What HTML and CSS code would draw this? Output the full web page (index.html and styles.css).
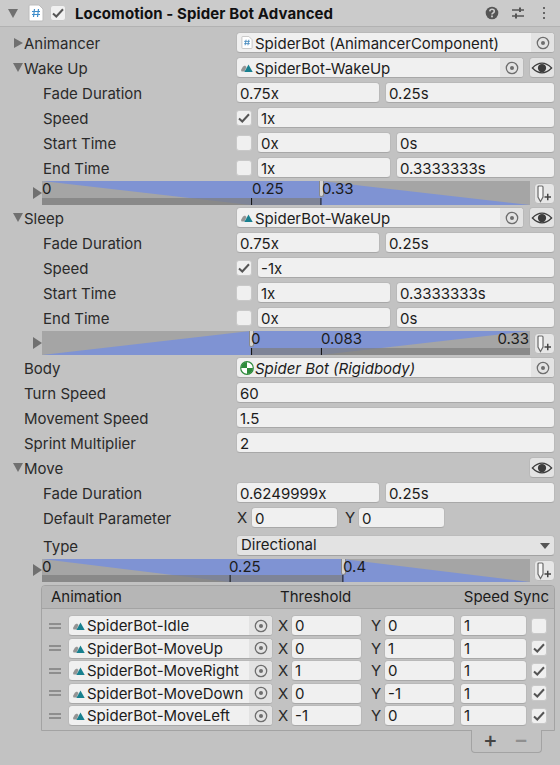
FILE: index.html
```html
<!DOCTYPE html>
<html lang="en">
<head>
    <meta charset="UTF-8">
    <title>Locomotion - Spider Bot Advanced</title>
    <link rel="stylesheet" href="styles.css">
</head>
<body>

    <svg class="defs" width="0" height="0">
        <symbol id="i-clip" viewBox="0 0 14 12">
            <path d="M1 8.500 L3 5 L5 4 L6.500 5.500 L4.500 10 L1.500 10 Z" fill="#949494"/>
            <path d="M8.500 3 L12.700 10.500 L4.300 10.500 Z" fill="#17808f"/>
        </symbol>
        <symbol id="i-script" viewBox="0 0 12 14">
            <path d="M0.500 1.500 Q0.500 0.500 1.500 0.500 H8 L11.500 4 V12.500 Q11.500 13.500 10.500 13.500 H1.500 Q0.500 13.500 0.500 12.500 Z" fill="#fff" stroke="#c4c4c4"/>
            <path d="M5 4 L4 10 M8 4 L7 10 M3 5.800 H9 M3 8.200 H9" stroke="#4d8fc0" stroke-width="1" fill="none"/>
        </symbol>
        <symbol id="i-target" viewBox="0 0 14 14">
            <circle cx="7" cy="7" r="5.700" fill="none" stroke="#6e6e6e" stroke-width="1.300"/>
            <circle cx="7" cy="7" r="2" fill="#6e6e6e"/>
        </symbol>
        <symbol id="i-eye" viewBox="0 0 24 14">
            <path d="M1.500 7 Q12 -3.500 22.500 7 Q12 17.500 1.500 7 Z" fill="none" stroke="#3c3c3c" stroke-width="1.400"/>
            <circle cx="12" cy="7" r="4.500" fill="#3c3c3c"/>
        </symbol>
        <symbol id="i-check" viewBox="0 0 12 10">
            <path d="M1 5.500 L4.300 8.500 L11 1.300" fill="none" stroke="#555" stroke-width="2"/>
        </symbol>
        <symbol id="i-event" viewBox="0 0 19 19">
            <path d="M3 3 Q3 2 4 2 H7 Q8 2 8 3 V13 L5.500 17.500 L3 13 Z" fill="#f7f7f7" stroke="#6a6a6a" stroke-width="1.200"/>
            <path d="M9.500 13 H16 M12.750 9.750 V16.250" stroke="#444" stroke-width="1.500" fill="none"/>
        </symbol>
    </svg>

    <div class="header">
        <span class="arrow arrow-down header-arrow"></span>
        <svg class="header-script" viewBox="0 0 16 18">
            <path d="M1 2 Q1 1 2 1 H11 L15 5 V16 Q15 17 14 17 H2 Q1 17 1 16 Z" fill="#fff" stroke="#bdbdbd"/>
            <path d="M6.500 5 L5.500 13 M10.500 5 L9.500 13 M4 7.500 H12 M4 10.500 H12" stroke="#3f8ecb" stroke-width="1.200" fill="none"/>
        </svg>
        <span class="check header-check"><svg><use href="#i-check"/></svg></span>
        <span class="header-title">Locomotion - Spider Bot Advanced</span>
        <svg class="header-icon" viewBox="0 0 14 14">
            <circle cx="7" cy="7" r="6.300" fill="#555"/>
            <path d="M4.800 5.300 Q5 3.300 7 3.300 Q9.300 3.300 9.300 5.200 Q9.300 6.300 8 7 Q7 7.500 7 8.500" fill="none" stroke="#cbcbcb" stroke-width="1.600"/>
            <rect x="6.100" y="9.500" width="1.800" height="1.800" fill="#cbcbcb"/>
        </svg>
        <svg class="header-icon sliders" viewBox="0 0 14 14">
            <path d="M1 4 H13 M1 10 H13" stroke="#555" stroke-width="1.300"/>
            <path d="M9 1.500 V6 M5 7.500 V12.500" stroke="#555" stroke-width="2"/>
        </svg>
        <svg class="header-icon kebab" viewBox="0 0 4 14">
            <rect x="1" y="1" width="2" height="2" fill="#666"/>
            <rect x="1" y="6" width="2" height="2" fill="#666"/>
            <rect x="1" y="11" width="2" height="2" fill="#666"/>
        </svg>
    </div>

    <div class="content">

        <div class="row">
            <span class="label foldout"><span class="arrow arrow-right"></span>Animancer</span>
            <div class="object-field">
                <svg class="obj-icon"><use href="#i-script"/></svg>
                <span class="obj-name">SpiderBot (AnimancerComponent)</span>
                <span class="picker"><svg><use href="#i-target"/></svg></span>
            </div>
        </div>

        <div class="row">
            <span class="label foldout"><span class="arrow arrow-down"></span>Wake Up</span>
            <div class="object-field">
                <svg class="obj-icon"><use href="#i-clip"/></svg>
                <span class="obj-name">SpiderBot-WakeUp</span>
                <span class="picker"><svg><use href="#i-target"/></svg></span>
            </div>
            <span class="eye-button"><svg><use href="#i-eye"/></svg></span>
        </div>

        <div class="row fade-row">
            <span class="label sub">Fade Duration</span>
            <div class="field">0.75x</div>
            <div class="field">0.25s</div>
        </div>
        <div class="row">
            <span class="label sub">Speed</span>
            <span class="check"><svg><use href="#i-check"/></svg></span>
            <div class="field">1x</div>
        </div>
        <div class="row time-row">
            <span class="label sub">Start Time</span>
            <span class="check"></span>
            <div class="field">0x</div>
            <div class="field">0s</div>
        </div>
        <div class="row time-row">
            <span class="label sub">End Time</span>
            <span class="check"></span>
            <div class="field">1x</div>
            <div class="field">0.3333333s</div>
        </div>

        <div class="timeline-row">
            <span class="arrow arrow-right timeline-arrow"></span>
            <div class="timeline">
                <svg class="timeline-art" viewBox="0 0 489 24" preserveAspectRatio="none">
                    <polygon points="0,0 279,0 489,24 209,24" fill="#7f93d3"/>
                    <rect x="0" y="17" width="279" height="7" fill="#7e7e7e" fill-opacity="0.7"/>
                    <rect x="209.500" y="17" width="1" height="7" fill="#111"/>
                    <rect x="279" y="17" width="1" height="7" fill="#111"/>
                </svg>
                <span class="handle" style="left: 277px"></span>
                <span class="tick" style="left: 0px">0</span>
                <span class="tick" style="left: 210px">0.25</span>
                <span class="tick" style="left: 280px">0.33</span>
            </div>
            <span class="event-button"><svg><use href="#i-event"/></svg></span>
        </div>

        <div class="row">
            <span class="label foldout"><span class="arrow arrow-down"></span>Sleep</span>
            <div class="object-field">
                <svg class="obj-icon"><use href="#i-clip"/></svg>
                <span class="obj-name">SpiderBot-WakeUp</span>
                <span class="picker"><svg><use href="#i-target"/></svg></span>
            </div>
            <span class="eye-button"><svg><use href="#i-eye"/></svg></span>
        </div>

        <div class="row fade-row">
            <span class="label sub">Fade Duration</span>
            <div class="field">0.75x</div>
            <div class="field">0.25s</div>
        </div>
        <div class="row">
            <span class="label sub">Speed</span>
            <span class="check"><svg><use href="#i-check"/></svg></span>
            <div class="field">-1x</div>
        </div>
        <div class="row time-row">
            <span class="label sub">Start Time</span>
            <span class="check"></span>
            <div class="field">1x</div>
            <div class="field">0.3333333s</div>
        </div>
        <div class="row time-row">
            <span class="label sub">End Time</span>
            <span class="check"></span>
            <div class="field">0x</div>
            <div class="field">0s</div>
        </div>

        <div class="timeline-row timeline-gap">
            <span class="arrow arrow-right timeline-arrow"></span>
            <div class="timeline">
                <svg class="timeline-art" viewBox="0 0 489 24" preserveAspectRatio="none">
                    <polygon points="0,24 209,0 489,0 279,24" fill="#7f93d3"/>
                    <rect x="209" y="17" width="280" height="7" fill="#7e7e7e" fill-opacity="0.7"/>
                    <rect x="209.500" y="17" width="1" height="7" fill="#111"/>
                    <rect x="279.500" y="17" width="1" height="7" fill="#111"/>
                </svg>
                <span class="handle" style="left: 207px"></span>
                <span class="tick" style="left: 209px">0</span>
                <span class="tick" style="left: 279px">0.083</span>
                <span class="tick tick-end">0.33</span>
            </div>
            <span class="event-button"><svg><use href="#i-event"/></svg></span>
        </div>

        <div class="row">
            <span class="label">Body</span>
            <div class="object-field">
                <svg class="obj-icon rigid" viewBox="0 0 14 14">
                    <circle cx="7" cy="7" r="6.300" fill="#fff" stroke="#2e8b3c" stroke-width="1.200"/>
                    <path d="M7 7 V1 A6 6 0 0 0 1 7 Z M7 7 V13 A6 6 0 0 0 13 7 Z" fill="#2e8b3c"/>
                </svg>
                <span class="obj-name italic">Spider Bot (Rigidbody)</span>
                <span class="picker"><svg><use href="#i-target"/></svg></span>
            </div>
        </div>
        <div class="row">
            <span class="label">Turn Speed</span>
            <div class="field">60</div>
        </div>
        <div class="row">
            <span class="label">Movement Speed</span>
            <div class="field">1.5</div>
        </div>
        <div class="row">
            <span class="label">Sprint Multiplier</span>
            <div class="field">2</div>
        </div>

        <div class="row">
            <span class="label foldout grow"><span class="arrow arrow-down"></span>Move</span>
            <span class="eye-button"><svg><use href="#i-eye"/></svg></span>
        </div>
        <div class="row fade-row">
            <span class="label sub">Fade Duration</span>
            <div class="field">0.6249999x</div>
            <div class="field">0.25s</div>
        </div>
        <div class="row param-row">
            <span class="label sub">Default Parameter</span>
            <span class="axis">X</span>
            <div class="field">0</div>
            <span class="axis axis-y">Y</span>
            <div class="field">0</div>
        </div>
        <div class="row type-row">
            <span class="label sub">Type</span>
            <div class="dropdown">Directional<span class="dropdown-arrow"></span></div>
        </div>

        <div class="timeline-row timeline-move">
            <span class="arrow arrow-right timeline-arrow"></span>
            <div class="timeline">
                <svg class="timeline-art" viewBox="0 0 489 23" preserveAspectRatio="none">
                    <polygon points="0,0 301,0 489,23 188,23" fill="#7f93d3"/>
                    <rect x="0" y="16" width="301" height="7" fill="#7e7e7e" fill-opacity="0.7"/>
                    <rect x="188" y="16" width="1" height="7" fill="#111"/>
                    <rect x="301" y="16" width="1" height="7" fill="#111"/>
                </svg>
                <span class="handle" style="left: 299px"></span>
                <span class="tick" style="left: 0px">0</span>
                <span class="tick" style="left: 187px">0.25</span>
                <span class="tick" style="left: 301px">0.4</span>
            </div>
            <span class="event-button"><svg><use href="#i-event"/></svg></span>
        </div>

        <div class="list">
            <div class="list-head">
                <span class="head-anim">Animation</span>
                <span class="head-threshold">Threshold</span>
                <span class="head-sync">Speed Sync</span>
            </div>
            <div class="list-body">
                <div class="list-row">
                    <span class="drag"></span>
                    <div class="object-field">
                        <svg class="obj-icon"><use href="#i-clip"/></svg>
                        <span class="obj-name">SpiderBot-Idle</span>
                        <span class="picker"><svg><use href="#i-target"/></svg></span>
                    </div>
                    <span class="axis">X</span><div class="field">0</div>
                    <span class="axis axis-y">Y</span><div class="field">0</div>
                    <div class="field">1</div>
                    <span class="check"></span>
                </div>
                <div class="list-row">
                    <span class="drag"></span>
                    <div class="object-field">
                        <svg class="obj-icon"><use href="#i-clip"/></svg>
                        <span class="obj-name">SpiderBot-MoveUp</span>
                        <span class="picker"><svg><use href="#i-target"/></svg></span>
                    </div>
                    <span class="axis">X</span><div class="field">0</div>
                    <span class="axis axis-y">Y</span><div class="field">1</div>
                    <div class="field">1</div>
                    <span class="check"><svg><use href="#i-check"/></svg></span>
                </div>
                <div class="list-row">
                    <span class="drag"></span>
                    <div class="object-field">
                        <svg class="obj-icon"><use href="#i-clip"/></svg>
                        <span class="obj-name">SpiderBot-MoveRight</span>
                        <span class="picker"><svg><use href="#i-target"/></svg></span>
                    </div>
                    <span class="axis">X</span><div class="field">1</div>
                    <span class="axis axis-y">Y</span><div class="field">0</div>
                    <div class="field">1</div>
                    <span class="check"><svg><use href="#i-check"/></svg></span>
                </div>
                <div class="list-row">
                    <span class="drag"></span>
                    <div class="object-field">
                        <svg class="obj-icon"><use href="#i-clip"/></svg>
                        <span class="obj-name">SpiderBot-MoveDown</span>
                        <span class="picker"><svg><use href="#i-target"/></svg></span>
                    </div>
                    <span class="axis">X</span><div class="field">0</div>
                    <span class="axis axis-y">Y</span><div class="field">-1</div>
                    <div class="field">1</div>
                    <span class="check"><svg><use href="#i-check"/></svg></span>
                </div>
                <div class="list-row">
                    <span class="drag"></span>
                    <div class="object-field">
                        <svg class="obj-icon"><use href="#i-clip"/></svg>
                        <span class="obj-name">SpiderBot-MoveLeft</span>
                        <span class="picker"><svg><use href="#i-target"/></svg></span>
                    </div>
                    <span class="axis">X</span><div class="field">-1</div>
                    <span class="axis axis-y">Y</span><div class="field">0</div>
                    <div class="field">1</div>
                    <span class="check"><svg><use href="#i-check"/></svg></span>
                </div>
            </div>
        </div>
        <div class="list-footer">
            <span class="list-add">+</span>
            <span class="list-remove">&minus;</span>
        </div>

    </div>

</body>
</html>
```

FILE: styles.css
```css
* {
    margin: 0;
    padding: 0;
    box-sizing: border-box;
}

body {
    width: 560px;
    height: 765px;
    overflow: hidden;
    background-color: #c2c2c2;
    color: #1c1c1c;
    font-family: Inter, "Noto Sans", sans-serif;
    font-size: 15px;
    line-height: 21px;
}

.defs {
    display: block;
    height: 0;
}

/* header */

.header {
    height: 27px;
    display: flex;
    align-items: center;
    background-color: #cbcbcb;
    border-bottom: 1px solid #b2b2b2;
}

.header-arrow {
    margin-left: 8px;
}

.header-script {
    width: 16px;
    height: 18px;
    margin-left: 10px;
}

.header-check {
    margin-left: 6px;
}

.header-title {
    margin-left: 9px;
    font-weight: 700;
    letter-spacing: 0.1px;
    flex: 1;
    white-space: nowrap;
    color: #111;
}

.header-icon {
    width: 14px;
    height: 14px;
    margin-right: 12px;
}

.sliders {
    margin-right: 17px;
}

.kebab {
    width: 4px;
    margin-right: 14px;
}

/* arrows */

.arrow {
    display: inline-block;
    flex: none;
    width: 0;
    height: 0;
    border-style: solid;
    border-color: transparent;
}

.arrow-right {
    border-width: 5px 0 5px 9px;
    border-left-color: #707070;
}

.arrow-down {
    border-width: 9px 5px 0 5px;
    border-top-color: #707070;
}

/* rows */

.content {
    padding: 5px 5px 0 0;
}

.row {
    display: flex;
    align-items: center;
    height: 21px;
    margin-bottom: 4px;
}

.label {
    flex: none;
    width: 236px;
    padding-left: 24px;
    padding-top: 2px;
    color: #2a2a2a;
    white-space: nowrap;
}

.foldout {
    display: flex;
    align-items: center;
    padding-left: 14px;
}

.foldout .arrow-down {
    margin-left: -1px;
}

.foldout .arrow {
    margin-right: 1px;
    margin-top: -2px;
}

.grow {
    flex: 1;
}

.sub {
    padding-left: 43px;
}

.field {
    flex: 1;
    min-width: 0;
    height: 21px;
    padding-left: 3px;
    background-color: #f0f0f0;
    border: 1px solid #b9b9b9;
    border-bottom-color: #a8a8a8;
    border-radius: 4px;
    color: #1c1c1c;
    white-space: nowrap;
    overflow: hidden;
}

.row .check + .field {
    margin-left: 5px;
}

.fade-row .field:nth-child(2) {
    flex: none;
    width: 144px;
    margin-right: 5px;
}

.time-row .field:nth-child(3) {
    flex: none;
    width: 134px;
    margin-right: 5px;
}

.param-row .field {
    flex: none;
    width: 87px;
}

.axis {
    flex: none;
    width: 15px;
    padding-left: 1px;
    color: #2a2a2a;
}

.axis-y {
    width: 20px;
    padding-left: 7px;
}

.check {
    flex: none;
    width: 16px;
    height: 16px;
    display: flex;
    align-items: center;
    justify-content: center;
    background-color: #f0f0f0;
    border: 1px solid #c9c9c9;
    border-radius: 3px;
}

.check svg {
    width: 12px;
    height: 10px;
}

/* object fields */

.object-field {
    flex: 1;
    min-width: 0;
    height: 21px;
    display: flex;
    align-items: center;
    background-color: #f0f0f0;
    border: 1px solid #b9b9b9;
    border-bottom-color: #a8a8a8;
    border-radius: 4px;
    overflow: hidden;
}

.obj-icon {
    flex: none;
    width: 14px;
    height: 13px;
    margin-left: 3px;
}

.rigid {
    height: 14px;
}

.obj-name {
    flex: 1;
    min-width: 0;
    margin-left: 1px;
    white-space: nowrap;
    overflow: hidden;
}

.row .obj-name {
    padding-top: 2px;
}

.italic {
    font-style: italic;
}

.picker {
    flex: none;
    width: 23px;
    height: 100%;
    display: flex;
    align-items: center;
    justify-content: center;
    background-color: #e3e3e3;
}

.picker svg {
    width: 14px;
    height: 14px;
}

.eye-button {
    flex: none;
    width: 26px;
    height: 21px;
    margin-left: 5px;
    display: flex;
    align-items: center;
    justify-content: center;
    background-color: #e3e3e3;
    border: 1px solid #b9b9b9;
    border-bottom-color: #a8a8a8;
    border-radius: 4px;
}

.eye-button svg {
    width: 22px;
    height: 14px;
}

.dropdown {
    position: relative;
    flex: 1;
    height: 21px;
    padding: 0 0 0 4px;
    background-color: #e3e3e3;
    border: 1px solid #bcbcbc;
    border-bottom-color: #a2a2a2;
    border-radius: 4px;
    line-height: 18px;
}

.dropdown-arrow {
    position: absolute;
    right: 4px;
    top: 7px;
    width: 0;
    height: 0;
    border-style: solid;
    border-width: 6px 5px 0 5px;
    border-color: #555 transparent transparent transparent;
}

.type-row {
    margin-top: 7px;
    margin-bottom: 3px;
}

/* timelines */

.timeline-row {
    display: flex;
    align-items: center;
    height: 24px;
    margin-top: -1px;
    margin-bottom: 2px;
    padding-left: 33px;
}

.timeline-gap {
    margin-top: -1px;
}

.timeline-move {
    height: 23px;
    margin-top: 0;
    margin-bottom: 3px;
}

.timeline-arrow {
    width: 8px;
    border-width: 6px 0 6px 9px;
    margin-top: -1px;
}

.timeline {
    position: relative;
    flex: 1;
    height: 100%;
    background-color: #a5a5a5;
}

.timeline-art {
    position: absolute;
    left: 0;
    top: 0;
    width: 100%;
    height: 100%;
}

.tick {
    position: absolute;
    top: 0;
    font-size: 15px;
    line-height: 15px;
    color: #1c1c1c;
}

.tick-end {
    right: 1px;
}

.handle {
    position: absolute;
    top: 0;
    width: 5px;
    height: 16px;
    background-color: #d4d4d4;
    border: 1px solid #8a8a8a;
    border-top: none;
    border-radius: 0 0 3px 3px;
}

.event-button {
    flex: none;
    width: 21px;
    height: 21px;
    margin-left: 4px;
    display: flex;
    background-color: #e6e6e6;
    border: 1px solid #bcbcbc;
    border-radius: 4px;
}

.event-button svg {
    width: 19px;
    height: 19px;
}

/* list */

.list {
    margin-left: 41px;
    background-color: #c2c2c2;
    border: 1px solid #a3a3a3;
    border-radius: 4px 4px 0 0;
}

.list-head {
    height: 23px;
    display: flex;
    align-items: center;
    background-color: #b6b6b6;
    border-bottom: 1px solid #a3a3a3;
    border-radius: 3px 3px 0 0;
    padding: 0 5px 1px 9px;
}

.head-anim {
    width: 229px;
}

.head-threshold {
    flex: 1;
}

.list-body {
    padding: 6px 7px 4px 7px;
    display: flex;
    flex-direction: column;
    gap: 1.5px;
}

.list-row {
    display: flex;
    align-items: center;
    height: 21px;
}

.drag {
    flex: none;
    width: 12px;
    height: 6px;
    margin-right: 7px;
    border-top: 2px solid #8e8e8e;
    border-bottom: 2px solid #8e8e8e;
}

.list-row .object-field {
    flex: none;
    width: 205px;
    margin-right: 4px;
}

.list-row .axis {
    width: 14px;
}

.list-row .picker {
    width: 23px;
}

.list-row .field {
    flex: none;
    width: 71px;
    line-height: 19px;
}

.list-row .axis-y {
    width: 22px;
    padding-left: 9px;
}

.list-row .field:nth-last-child(2) {
    width: 67px;
    margin-left: 5px;
}

.list-row .check {
    margin-left: 4px;
}

.list-footer {
    width: 71px;
    height: 23px;
    margin: -1px 13px 0 auto;
    padding-bottom: 3px;
    display: flex;
    align-items: center;
    background-color: #c2c2c2;
    border: 1px solid #a3a3a3;
    border-top: none;
    border-radius: 0 0 4px 4px;
    font-size: 22px;
    font-weight: 500;
}

.list-add {
    margin-left: 11px;
    color: #444;
}

.list-remove {
    margin-left: 16px;
    color: #8f8f8f;
}
```
